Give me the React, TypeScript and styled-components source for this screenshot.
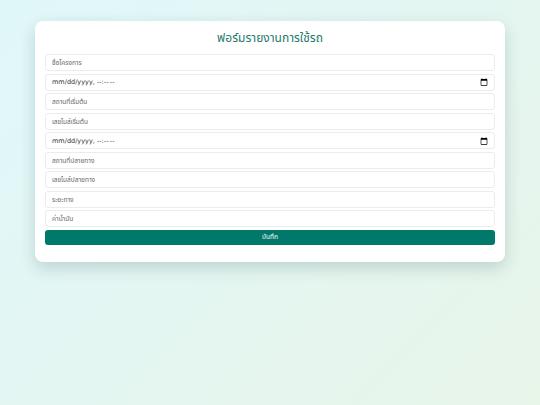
import React, { useState } from "react";
import styled, { createGlobalStyle } from "styled-components";

const GlobalStyle = createGlobalStyle`
  html, body {
    margin: 0;
    padding: 0;
  }
  body {
    min-height: 405px;
    font-family: "Noto Sans", "Noto Sans Thai", sans-serif;
    background: linear-gradient(135deg, #e0f7fa 0%, #e8f5e9 100%);
  }
`;

const fields = [
  { name: "project", type: "text", placeholder: "ชื่อโครงการ" },
  { name: "startTime", type: "datetime-local", placeholder: "" },
  { name: "startPlace", type: "text", placeholder: "สถานที่เริ่มต้น" },
  { name: "startMile", type: "text", placeholder: "เลขไมล์เริ่มต้น" },
  { name: "endTime", type: "datetime-local", placeholder: "" },
  { name: "endPlace", type: "text", placeholder: "สถานที่ปลายทาง" },
  { name: "endMile", type: "text", placeholder: "เลขไมล์ปลายทาง" },
  { name: "distance", type: "text", placeholder: "ระยะทาง" },
  { name: "fuel", type: "text", placeholder: "ค่าน้ำมัน" },
];

function App() {
  const [values, setValues] = useState<Record<string, string>>({});
  return (
    <Page>
      <GlobalStyle />
      <Card>
        <Title>ฟอร์มรายงานการใช้รถ</Title>
        <Form onSubmit={e => e.preventDefault()}>
          {fields.map(f => (
            <Field
              key={f.name}
              type={f.type}
              isDate={f.type === "datetime-local"}
              placeholder={f.placeholder}
              value={values[f.name] || ""}
              onChange={e => setValues({ ...values, [f.name]: e.target.value })}
            />
          ))}
          <SaveButton type="submit">บันทึก</SaveButton>
        </Form>
      </Card>
    </Page>
  );
}

const Page = styled.div`
  padding: 21px 35px;
`;

const Card = styled.div`
  background: #fff;
  border-radius: 8px;
  padding: 8px 10px 17px;
  box-shadow: 0 6px 16px rgba(0, 60, 60, 0.18);
`;

const Title = styled.h2`
  margin: 0 0 7px;
  text-align: center;
  color: #1f7a6e;
  font-size: 12px;
  font-weight: 400;
  line-height: 18px;
`;

const Form = styled.form`
  display: flex;
  flex-direction: column;
  gap: 2.5px;
`;

const Field = styled.input.withConfig({
  shouldForwardProp: p => p !== "isDate",
})<{ isDate: boolean }>`
  box-sizing: border-box;
  height: 17px;
  padding: 0 6px;
  border: 1px solid #ececec;
  border-radius: 3px;
  font-family: ${p => (p.isDate ? `"DejaVu Sans", sans-serif` : "inherit")};
  font-size: 6.5px;
  color: #333;
  background: #fff;
  outline: none;
  &::placeholder {
    color: #666;
  }
  &::-webkit-datetime-edit,
  &::-webkit-datetime-edit-fields-wrapper,
  &::-webkit-datetime-edit-text,
  &::-webkit-datetime-edit-month-field,
  &::-webkit-datetime-edit-day-field,
  &::-webkit-datetime-edit-year-field,
  &::-webkit-datetime-edit-hour-field,
  &::-webkit-datetime-edit-minute-field,
  &::-webkit-datetime-edit-ampm-field {
    color: #333;
    padding: 0;
  }
  &::-webkit-calendar-picker-indicator {
    width: 8px;
    height: 8px;
    padding: 0;
    margin: 0;
  }
`;

const SaveButton = styled.button`
  height: 15px;
  border: none;
  border-radius: 3px;
  background: #00796b;
  color: #fff;
  font-family: inherit;
  font-size: 6.5px;
  cursor: pointer;
`;

export default App;
